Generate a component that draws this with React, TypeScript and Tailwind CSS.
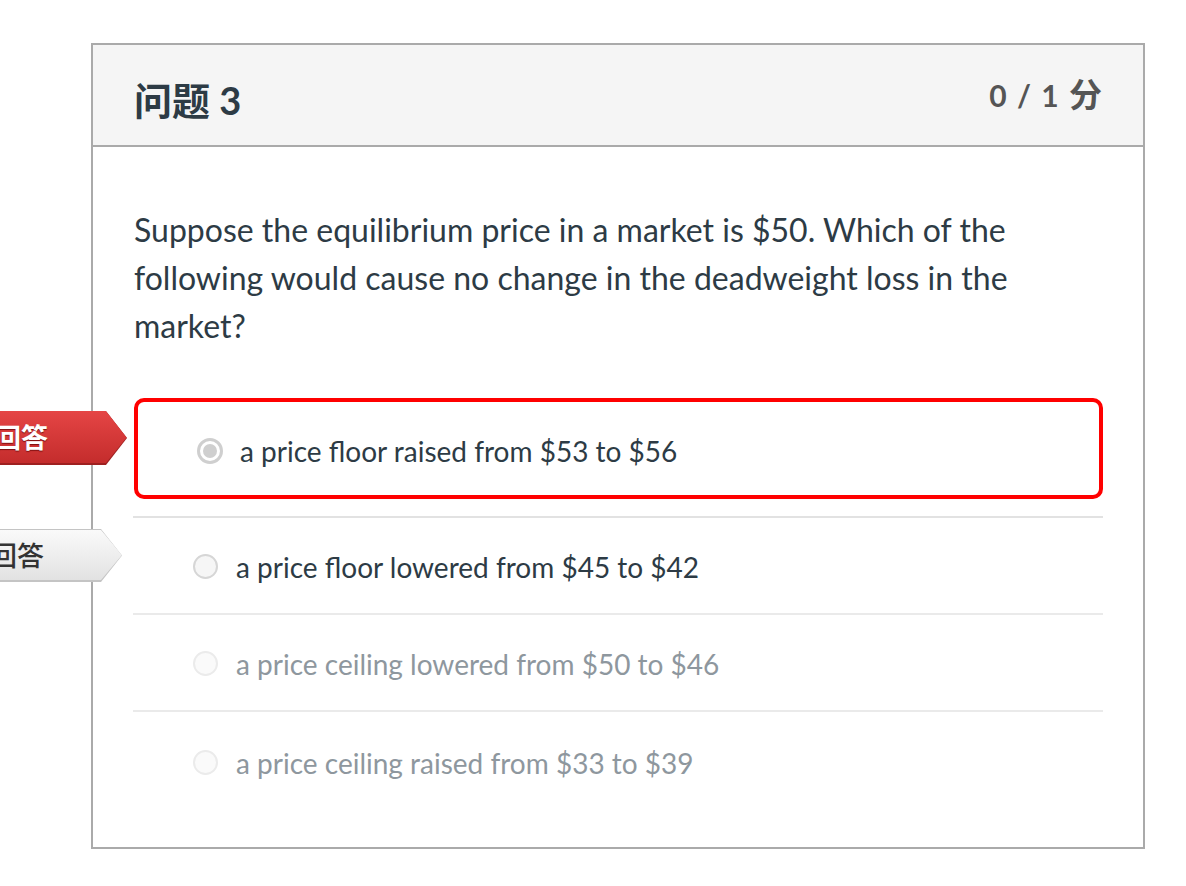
import React from "react";

const font = { fontFamily: '"Lato", "Noto Sans CJK SC", sans-serif' };

function Tag({ kind }: { kind: "red" | "gray" }) {
  const red = kind === "red";
  const clip = {
    clipPath:
      "polygon(0 0, calc(100% - 21px) 0, 100% 50%, calc(100% - 21px) 100%, 0 100%)",
  };
  return (
    <div
      className={
        "absolute right-full w-[260px] " +
        (red ? "top-[9px] h-[54px] mr-[11px] bg-[#9e2020]" : "top-[11px] h-[53px] mr-[11px] bg-[#c4c4c4]")
      }
      style={clip}
    >
      <div
        className={
          "absolute inset-x-0 top-0 bottom-[2px] flex items-center justify-end text-[27px] " +
          (red
            ? "pr-[79px] bg-gradient-to-b from-[#e54545] to-[#c42c2c] text-white font-bold [text-shadow:0_1px_1px_#7a1010]"
            : "pr-[78px] bg-gradient-to-b from-[#fafafa] to-[#e2e2e2] text-[#333] font-medium")
        }
        style={{ ...clip, fontFamily: '"Noto Sans CJK SC", sans-serif', ...(red ? {} : { top: 1, bottom: 2 }) }}
      >
        您的回答
      </div>
    </div>
  );
}

function Radio({ state }: { state: "selected" | "normal" | "disabled" }) {
  if (state === "selected")
    return (
      <span className="flex h-[26px] w-[26px] shrink-0 items-center justify-center rounded-full border-[3px] border-[#cfcfcf] bg-white">
        <span className="h-[14px] w-[14px] rounded-full bg-[#cfcfcf]" />
      </span>
    );
  return (
    <span
      className={
        "h-[25px] w-[25px] shrink-0 rounded-full border-2 " +
        (state === "normal" ? "border-[#d6d6d6] bg-[#f6f6f6]" : "border-[#ebebeb] bg-[#fafafa]")
      }
    />
  );
}

export default function App() {
  return (
    <div className="h-[886px] w-[1186px] overflow-hidden bg-white pt-[43px]" style={font}>
      <div className="ml-[91px] h-[806px] w-[1054px] border-2 border-[#aaaaaa]">
        <div className="flex h-[102px] items-start justify-between border-b-2 border-[#aaaaaa] bg-[#f5f5f5] px-[41px] pt-[31px]">
          <div className="text-[38px] font-bold leading-[48px] text-[#2d3b45]">问题 3</div>
          <div className="mt-[-6px] text-[30px] font-bold leading-[48px] text-[#555] [word-spacing:3px]">
            0 / 1 <span className="text-[33px]">分</span>
          </div>
        </div>
        <div className="px-[40px] pt-[59px]">
          <p className="pl-[1px] text-[32px] leading-[48px] text-[#2d3b45]">
            Suppose the equilibrium price in a market is $50. Which of the following would cause no change in
            the deadweight loss in the market?
          </p>
          <div className="mt-[48px] w-[970px]">
            <div className="border-b-2 border-[#e2e2e2] pb-[17px]">
              <div className="relative ml-[1px] flex h-[101px] items-center gap-[17px] rounded-[10px] border-4 border-[#ff0000] pl-[59px] pt-[4px]">
                <Tag kind="red" />
                <Radio state="selected" />
                <span className="text-[28px] text-[#2d3b45]">a price floor raised from $53 to $56</span>
              </div>
            </div>
            <div className="relative flex h-[97px] items-center gap-[18px] border-b-2 border-[#eaeaea] pt-[2px] pl-[60px]">
              <Tag kind="gray" />
              <Radio state="normal" />
              <span className="text-[28px] text-[#2d3b45]">a price floor lowered from $45 to $42</span>
            </div>
            <div className="flex h-[97px] items-center gap-[18px] border-b-2 border-[#eaeaea] pt-[2px] pl-[60px]">
              <Radio state="disabled" />
              <span className="text-[28px] text-[#8e979e]">a price ceiling lowered from $50 to $46</span>
            </div>
            <div className="flex h-[97px] items-center gap-[18px] pl-[60px] pt-[4px]">
              <Radio state="disabled" />
              <span className="text-[28px] text-[#8e979e]">a price ceiling raised from $33 to $39</span>
            </div>
          </div>
        </div>
      </div>
    </div>
  );
}
